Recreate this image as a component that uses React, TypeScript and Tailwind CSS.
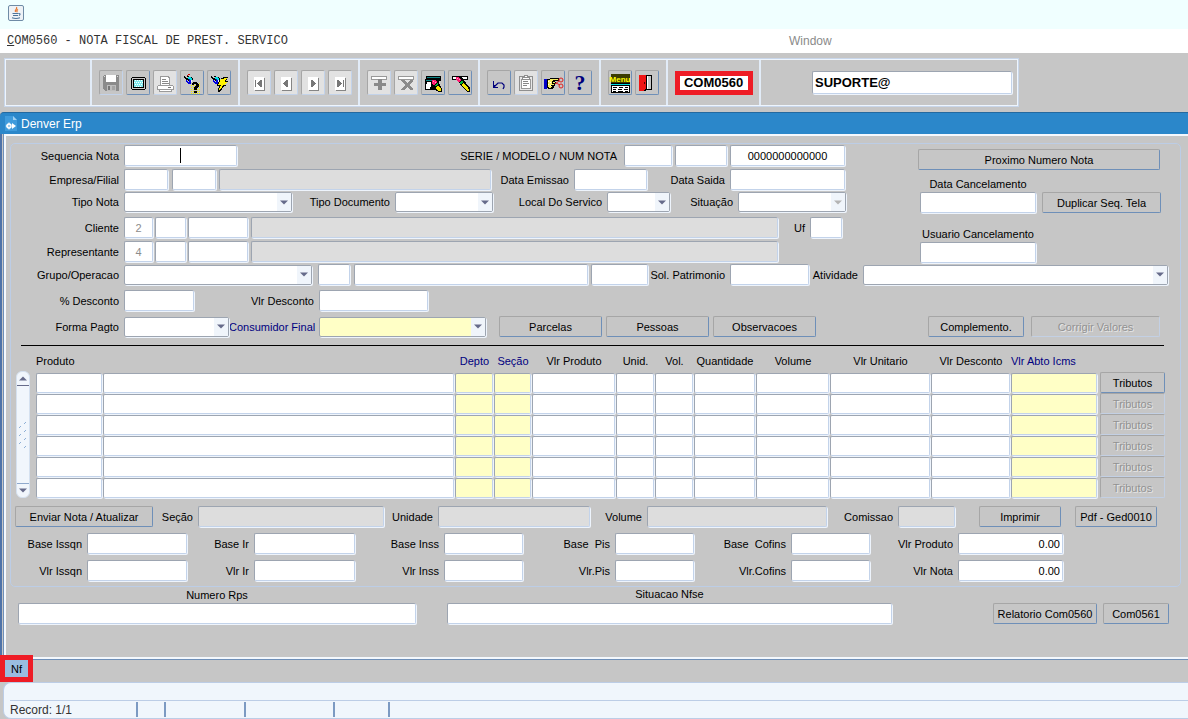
import React from 'react';
import clsx from 'clsx';

const fieldBase =
  'border border-t-[#9da5b1] border-l-[#9da5b1] border-r-[#c3d3ea] border-b-[#c3d3ea] rounded-[2px] shadow-[1px_1px_0_#eef4fc] outline-none';

type FieldProps = {
  id: string;
  className?: string;
  value?: string;
  gray?: boolean;
  label?: string;
};

function Field({ id, className, value, gray, label }: FieldProps) {
  return (
    <input
      id={id}
      aria-label={label}
      defaultValue={value}
      readOnly={gray}
      className={clsx(fieldBase, 'h-[21px] min-w-0 px-[2px] text-[11px]', gray ? 'bg-[#dddddd]' : 'bg-white', className)}
    />
  );
}

function Combo({ id, className, yellow, disabled }: { id: string; className?: string; yellow?: boolean; disabled?: boolean }) {
  return (
    <div className={clsx('relative h-5', className)}>
      <select
        id={id}
        disabled={disabled}
        className={clsx(
          'block h-full w-full appearance-none rounded-[2px] border border-[#9da5b1] px-1 text-[11px] shadow-[1px_1px_0_#eef4fc] outline-none',
          yellow ? 'bg-[#ffffc6]' : 'bg-white'
        )}
      >
        <option></option>
      </select>
      <span className="pointer-events-none absolute inset-y-px right-px flex w-[14px] items-center justify-center bg-[#f0f5fb]">
        <svg width="8" height="5" viewBox="0 0 8 5">
          <path d="M0 0.5h8L4 4.5z" fill={disabled ? '#b4b4b4' : '#666b8a'} />
        </svg>
      </span>
    </div>
  );
}

function Label({ htmlFor, className, children }: { htmlFor: string; className?: string; children: React.ReactNode }) {
  return (
    <label htmlFor={htmlFor} className={clsx('shrink-0 whitespace-pre pr-[5px] text-right', className)}>
      {children}
    </label>
  );
}

function Btn({ className, disabled, children }: { className?: string; disabled?: boolean; children: React.ReactNode }) {
  return (
    <button
      disabled={disabled}
      className={clsx(
        'h-[21px] shrink-0 whitespace-nowrap rounded-[2px] border border-t-[#a6a6a6] border-l-[#a6a6a6] text-center',
        disabled
          ? 'border-r-[#c3d0e4] border-b-[#c3d0e4] text-[#929292] [text-shadow:1px_1px_0_#e6e6e6]'
          : 'border-r-[#6e8fb8] border-b-[#6e8fb8]',
        className
      )}
    >
      {children}
    </button>
  );
}

/* ---------- toolbar icons, drawn on the 24px face of the button ---------- */

const SaveIcon = (
  <>
    <path d="M5 4h15v16H6l-2-2V5h1z" fill="#8b8b8b" />
    <path d="M7 4h10v7H7z" fill="#fff" />
    <path d="M5 5h1v1H5zM18 5h1v1h-1z" fill="#ddd" />
    <path d="M8 14h9v6H8z" fill="#bdbdbd" />
    <path d="M9 15h2v4H9z" fill="#777" />
    <path d="M13 15h3v4h-3z" fill="#a5a5a5" />
  </>
);

const ScreenIcon = (
  <>
    <path d="M6 6h13v1h1v11h-1v1H6v-1H5V7h1z" fill="#000" />
    <path d="M6 7h13v11H6z" fill="#c6c6c6" />
    <path d="M7 8h11v9H7z" fill="#000" />
    <path d="M8 9h9v7H8z" fill="#7fe9ee" />
    <path
      d="M9 9h1v1H9zM11 9h1v1h-1zM13 9h1v1h-1zM15 9h1v1h-1zM8 11h1v1H8zM10 11h1v1h-1zM12 11h1v1h-1zM14 11h1v1h-1zM16 11h1v1h-1zM9 13h1v1H9zM11 13h1v1h-1zM13 13h1v1h-1zM15 13h1v1h-1zM10 15h1v1h-1zM12 15h1v1h-1zM14 15h1v1h-1z"
      fill="#fff"
    />
  </>
);

const PrintIcon = (
  <>
    <path d="M7 5h8l2 2v7H7z" fill="#999" />
    <path d="M8 6h7l1 2v6H8z" fill="#fff" />
    <path d="M9 8h4v1H9zM9 10h6v1H9zM9 12h7v1H9z" fill="#888" />
    <path d="M5 14h15v1h1v4h-2v2H6v-2H4v-4h1z" fill="#9a9a9a" />
    <path d="M5 15h15v3H5zM7 19h11v1H7z" fill="#fff" />
    <path d="M15 16h3v1h-3z" fill="#777" />
  </>
);

const Torch = (
  <>
    <path d="M4 5h1v1h1v1h2v1h1v2H8V9H6V8H5V7H4zM11 6h1v1h1v2h-1V8h-1z" fill="#000" />
    <path d="M8 6h3v1h1v2h-2V8H8z" fill="#00dce0" />
    <path d="M6 9h1v1h1v1h1V8h1v1h1v4H8v-1H7v-1H6z" fill="#0000e0" />
    <path d="M7 5h2v1H7z" fill="#000" />
    <path d="M11 9h1v2h-1z" fill="#e8ffff" />
  </>
);

const QueryIcon = (
  <>
    <path d="M8 3h2v1H8zM7 4h1v1H7z" fill="#d00000" />
    {Torch}
    <path d="M17 12.500h4M11 14.500h10M11 16.500h10M11 18.500h10M11 20.500h10M11 22.500h10" stroke="#f4f000" strokeDasharray="1 1" />
    <path d="M13 11h4v1h1v1h1v3h-1v1h-1v2h-3v-3h1v-1h1v-2h-2v1h-2v-2h1z" fill="#000" />
    <path d="M14 20h3v2h-3z" fill="#000" />
  </>
);

const ExecuteIcon = (
  <>
    {Torch}
    <path d="M16 6h5v1h-1v2h-1v1h2v1h-1v1h-1v1h-1v1h1v1h-2v1h-1v1h-1v2h-1v1h-1v1h-2v-4h1v-2h-2v-2h1v-2h1v-2h1V9h1V7h1z" fill="#000" />
    <path d="M17 7h3v1h-1v1h-1v2h2v1h-1v1h-1v1h-2v1h-1v2h-1v1h-1v1h-1v-2h1v-2h1v-1h-3v-1h1v-2h1v-2h1V8h2z" fill="#fff200" />
  </>
);

const page = (
  <>
    <path d="M8 7h10v13H8z" fill="#858585" />
    <path d="M7 6h10v13H7z" fill="#fff" />
  </>
);

const FirstIcon = (
  <>
    {page}
    <path d="M8 9h1v7H8zM15 9v7h-2v-1h-1v-1h-1v-1h-1v-1h1v-1h1v-1h1V9z" fill="#777" />
  </>
);
const PrevIcon = (
  <>
    {page}
    <path d="M14 9v7h-2v-1h-1v-1h-1v-1H9v-1h1v-1h1v-1h1V9z" fill="#777" />
  </>
);
const NextIcon = (
  <>
    {page}
    <path d="M10 9v7h2v-1h1v-1h1v-1h1v-1h-1v-1h-1v-1h-1V9z" fill="#777" />
  </>
);
const LastIcon = (
  <>
    {page}
    <path d="M15 9h1v7h-1zM9 9v7h2v-1h1v-1h1v-1h1v-1h-1v-1h-1v-1h-1V9z" fill="#777" />
  </>
);

const InsertIcon = (
  <>
    <path d="M4 5h16v4H4z" fill="#999" />
    <path d="M5 6h14v2H5z" fill="#fff" />
    <path d="M11 8h4v4h4v3h-4v4h-4v-4H7v-3h4z" fill="#8a8a8a" />
  </>
);

const RemoveIcon = (
  <>
    <path d="M4 5h16v4H4z" fill="#999" />
    <path d="M5 6h14v2H5z" fill="#fff" />
    <path d="M7 9h3l3 3 3-3h3v1l-4 4 4 4v1h-3l-3-3-3 3H7v-1l4-4-4-4z" fill="#8a8a8a" />
  </>
);

const ClearRecordIcon = (
  <>
    <path d="M5 5h15v5h-2v9H4V8h1z" fill="#000" />
    <path d="M6 6h13v1H6zM5 9h12v1H5z" fill="#0b8585" />
    <path d="M6 11h4v5H9v2H5v-5h1z" fill="#fff" />
    <path d="M11 8h4v1h2v2h1v2h1v2h1v2h1v4h-4v-1h-2v-2h-1v-2h-2v-2h-1v-2h-1v-2h1z" fill="#000" />
    <path d="M11 9h4v1h1v2h-1v1h-1v1h-2v-1h-1z" fill="#ff1a70" />
    <path d="M12 10h1v1h-1zM14 11h1v1h-1z" fill="#ffa0d0" />
    <path d="M16 12h1v2h-1v1h-2v-1h1v-1h1z" fill="#00b43a" />
    <path d="M16 15h2v1h1v1h1v3h-3v-1h-1v-1h-1v-2h1z" fill="#f6e600" />
  </>
);

const ClearItemIcon = (
  <>
    <path d="M4 5h16v4H4z" fill="#000" />
    <path d="M5 6h14v2H5z" fill="#fff" />
    <path d="M8 5h4l3 3 7 9v4h-3l-7-8-4-4z" fill="#000" />
    <path d="M8 6h3v1h1v1h1v2h-1v1h-2v-1H9V9H8z" fill="#ff1a70" />
    <path d="M9 7h1v1H9zM11 8h1v1h-1z" fill="#ffa0d0" />
    <path d="M13 10h2v2h-1v1h-2v-2h1z" fill="#00b43a" />
    <path d="M15 12h1v1h1v1h1v1h1v1h1v2h1v2h-2v-1h-1v-1h-1v-1h-1v-1h-1v-1h-1v-2h1z" fill="#f6e600" />
  </>
);

const UndoIcon = (
  <>
    <path d="M6 10h1v4h1v2h3v1H6z" fill="#00007c" />
    <path d="M7 16l4-4h4l2 2v2l-1 2" fill="none" stroke="#00007c" strokeWidth="1.200" shapeRendering="auto" />
  </>
);

const PasteIcon = (
  <>
    <path d="M5 5h14v15H5z" fill="#8f8f8f" />
    <path d="M6 6h12v13H6z" fill="#e8e8e8" />
    <path d="M7 8h10v10H7z" fill="#999" />
    <path d="M8 9h8v8H8z" fill="#fff" />
    <path d="M8 6h8v3H8zM10 4h4v2h-4z" fill="#8f8f8f" />
    <path d="M9 7h6v1H9zM11 5h2v1h-2z" fill="#fff" />
    <path d="M9 10h5v1H9zM9 12h6v1H9zM9 14h4v1H9z" fill="#888" />
  </>
);

const HandIcon = (
  <>
    <path d="M3 8h3v10H3z" fill="#0000c8" />
    <path d="M6 8h3V7h9v3h-4v1h1v2h-1v2h-1v2h-1v1H7v-1H6z" fill="#000" />
    <path d="M7 9h2V8h8v1h-5v1h-1v6h-1v1H8v-1H7z" fill="#f8ee60" />
    <path d="M7 10h1v1H7zM9 11h1v1H9zM7 13h1v1H7zM9 14h1v1H9z" fill="#fff" />
    <path d="M11 10h3v1h-3zM11 12h3v1h-3zM10 14h3v1h-3z" fill="#000" />
    <path d="M12 11h2v1h-2zM11 13h2v1h-2z" fill="#f8ee60" />
    <g fill="none" stroke="#e02020" shapeRendering="auto">
      <circle cx="20" cy="9" r="2" />
      <circle cx="20" cy="15" r="2" />
      <path d="M14 13l4-3M15 12l4 2" />
    </g>
  </>
);

const HelpIcon = (
  <text x="12" y="19" textAnchor="middle" fill="#00007c" fontSize="22" fontWeight="bold" fontFamily="Liberation Serif, serif">
    ?
  </text>
);

const MenuIcon = (
  <>
    <path d="M3 3h19v9H3z" fill="#3c3c00" />
    <text x="12" y="11" textAnchor="middle" fill="#ffff00" fontSize="8" fontWeight="bold" fontFamily="Liberation Sans, sans-serif">
      Menu
    </text>
    <path d="M3 12h19v3H3z" fill="#000" />
    <path d="M3 13h19v1H3z" fill="#00dce0" />
    <path d="M3 15h19v7H3z" fill="#000" />
    <path d="M4 15h17v6H4z" fill="#fff" />
    <path d="M5 16h4v1H5zM5 18h3v1H5zM5 20h3v1H5zM11 16h4v1h-4zM17 16h3v1h-3zM10 18h4v1h-4zM16 18h4v1h-4zM10 20h5v1h-5zM17 20h3v1h-3z" fill="#000" />
  </>
);

const ExitIcon = (
  <>
    <path d="M4 4h13v15H4z" fill="#000" />
    <path d="M11 5h5v13h-5z" fill="#c6c6c6" />
    <path d="M12 5h1v13h-1z" fill="#fff" />
    <path d="M4 4h7v14l-2 2H4z" fill="#f01414" />
    <path d="M11 5h1v14h-1v1H9v-1h1v-1h1z" fill="#000" />
    <path d="M9 11h1v2H9z" fill="#500" />
  </>
);

type Tool = { name: string; icon: React.ReactNode; off?: boolean };

const toolGroups: { width: string; tools: Tool[] }[] = [
  {
    width: 'w-[148px]',
    tools: [
      { name: 'Salvar', icon: SaveIcon, off: true },
      { name: 'Tela', icon: ScreenIcon },
      { name: 'Imprimir', icon: PrintIcon, off: true },
      { name: 'Consultar', icon: QueryIcon },
      { name: 'Executar consulta', icon: ExecuteIcon },
    ],
  },
  {
    width: 'w-[120px]',
    tools: [
      { name: 'Primeiro', icon: FirstIcon, off: true },
      { name: 'Anterior', icon: PrevIcon, off: true },
      { name: 'Proximo', icon: NextIcon, off: true },
      { name: 'Ultimo', icon: LastIcon, off: true },
    ],
  },
  {
    width: 'w-[120px]',
    tools: [
      { name: 'Inserir', icon: InsertIcon, off: true },
      { name: 'Remover', icon: RemoveIcon, off: true },
      { name: 'Limpar registro', icon: ClearRecordIcon },
      { name: 'Limpar campo', icon: ClearItemIcon },
    ],
  },
  {
    width: 'w-[121px]',
    tools: [
      { name: 'Desfazer', icon: UndoIcon },
      { name: 'Lista', icon: PasteIcon, off: true },
      { name: 'Editar', icon: HandIcon },
      { name: 'Ajuda', icon: HelpIcon },
    ],
  },
  {
    width: 'w-[67px]',
    tools: [
      { name: 'Menu', icon: MenuIcon },
      { name: 'Sair', icon: ExitIcon },
    ],
  },
];

function ToolButton({ name, icon, off }: Tool) {
  return (
    <button
      aria-label={name}
      disabled={off}
      className={clsx(
        'h-[25px] w-6 rounded-[2px] border border-t-[#a6a6a6] border-l-[#a6a6a6]',
        off ? 'border-r-[#c3d3ea] border-b-[#c3d3ea]' : 'border-r-[#6e8fb8] border-b-[#6e8fb8]',
        off && name !== 'Salvar' && 'bg-[#e2e2e2]'
      )}
    >
      <svg className="-m-px block" width="24" height="24" viewBox="0 0 24 24" shapeRendering="crispEdges">
        {icon}
      </svg>
    </button>
  );
}

function Toolbar() {
  return (
    <div className="h-[59px] pl-[5px] pt-[6px]">
      <div className="flex h-[47px] w-[1013px] border border-[#eef5fd] shadow-[0_0_0_1px_#c8d6ea]">
        <div className="w-[86px] border-r-2 border-[#e2ecf8]" />
        {toolGroups.map((g, i) => (
          <div key={i} className={clsx('flex items-center justify-center gap-[3px] border-r-2 border-[#e2ecf8]', g.width)}>
            {g.tools.map((t) => (
              <ToolButton key={t.name} {...t} />
            ))}
          </div>
        ))}
        <div className="flex w-[93px] items-center justify-center border-r-2 border-[#e2ecf8]">
          <span className="flex h-6 w-[78px] items-center justify-center border-[5px] border-[#ee1c25] bg-white text-[13px] font-bold">
            COM0560
          </span>
        </div>
        <div className="flex flex-1 items-center justify-end pr-[5px]">
          <input
            aria-label="Usuario"
            defaultValue="SUPORTE@"
            className={clsx(fieldBase, 'h-[23px] w-[200px] bg-white px-[2px] text-[13px] font-bold')}
          />
        </div>
      </div>
    </div>
  );
}

/* ---------- item grid ---------- */

const columns = [
  { key: 'produto', title: 'Produto', col: 'w-[67px]' },
  { key: 'descricao', title: '', col: '' },
  { key: 'depto', title: 'Depto', col: 'w-[39px]', yellow: true },
  { key: 'secao', title: 'Seção', col: 'w-[38px]', yellow: true },
  { key: 'vlrProduto', title: 'Vlr Produto', col: 'w-[84px]' },
  { key: 'unid', title: 'Unid.', col: 'w-[39px]' },
  { key: 'vol', title: 'Vol.', col: 'w-[39px]' },
  { key: 'quantidade', title: 'Quantidade', col: 'w-[62px]' },
  { key: 'volume', title: 'Volume', col: 'w-[74px]' },
  { key: 'vlrUnitario', title: 'Vlr Unitario', col: 'w-[101px]' },
  { key: 'vlrDesconto', title: 'Vlr Desconto', col: 'w-[80px]' },
  { key: 'vlrAbto', title: 'Vlr Abto Icms', col: 'w-[87px]', yellow: true },
];

function ItemsTable() {
  return (
    <div className="ml-[5px] mr-[15px] flex items-end">
      <div className="mr-[6px] flex h-[127px] w-[14px] shrink-0 flex-col items-center justify-between rounded-[6px] border border-[#d5e1f0] bg-[#f1f6fc]">
        <button aria-label="Subir" className="flex h-[14px] w-full items-center justify-center border-b border-[#666b8a]">
          <svg width="8" height="5" viewBox="0 0 8 5">
            <path d="M0 4.5h8L4 0.5z" fill="#666b8a" />
          </svg>
        </button>
        <svg width="8" height="28" viewBox="0 0 8 28" stroke="#8fb0d6">
          <path d="M5 3l2-2M0 7l2-2M5 11l2-2M0 15l2-2M5 19l2-2M0 23l2-2M5 27l2-2" />
        </svg>
        <button aria-label="Descer" className="flex h-[14px] w-full items-center justify-center border-t border-[#8fa9cc]">
          <svg width="8" height="5" viewBox="0 0 8 5">
            <path d="M0 0.5h8L4 4.5z" fill="#666b8a" />
          </svg>
        </button>
      </div>
      <table className="w-full table-fixed border-separate border-spacing-0">
        <colgroup>
          {columns.map((c) => (
            <col key={c.key} className={c.col} />
          ))}
          <col className="w-[67px]" />
        </colgroup>
        <thead>
          <tr className="h-[26px]">
            {columns.map((c) => (
              <th
                key={c.key}
                className={clsx(
                  'whitespace-nowrap p-0 pt-1 font-normal',
                  c.key === 'produto' || c.key === 'vlrAbto' ? 'text-left' : 'text-center',
                  c.yellow && 'text-[#000080]'
                )}
              >
                {c.title}
              </th>
            ))}
            <th className="p-0" />
          </tr>
        </thead>
        <tbody>
          {[1, 2, 3, 4, 5, 6].map((row) => (
            <tr key={row} className="h-[21px]">
              {columns.map((c) => (
                <td key={c.key} className="p-0 pr-px">
                  <input
                    aria-label={`${c.title || 'Descricao'} ${row}`}
                    className={clsx(fieldBase, 'block h-5 w-full px-1 text-[11px]', c.yellow ? 'bg-[#ffffc6]' : 'bg-white')}
                  />
                </td>
              ))}
              <td className="p-0 pl-[2px]">
                <Btn className="block h-5 w-full" disabled={row > 1}>
                  Tributos
                </Btn>
              </td>
            </tr>
          ))}
        </tbody>
      </table>
    </div>
  );
}

const totals = [
  [
    ['Base Issqn', ''],
    ['Base Ir', ''],
    ['Base Inss', ''],
    ['Base  Pis', ''],
    ['Base  Cofins', ''],
    ['Vlr Produto', '0.00'],
  ],
  [
    ['Vlr Issqn', ''],
    ['Vlr Ir', ''],
    ['Vlr Inss', ''],
    ['Vlr.Pis', ''],
    ['Vlr.Cofins', ''],
    ['Vlr Nota', '0.00'],
  ],
];

function Totals() {
  return (
    <div className="mt-[6px] grid grid-cols-[76px_100px_67px_101px_89px_79px_92px_79px_97px_79px_88px_105px] items-center gap-y-[6px]">
      {totals.flat().map(([label, value]) => (
        <React.Fragment key={label}>
          <Label htmlFor={`tot-${label}`}>{label}</Label>
          <Field id={`tot-${label}`} value={value} className="text-right" />
        </React.Fragment>
      ))}
    </div>
  );
}

function NotaForm() {
  return (
    <div className="rounded-[5px] border border-[#bccde6] pb-[5px] pt-px">
      <div className="flex">
        <div className="mr-[72px] flex-1">
          <div className="flex items-center">
            <Label htmlFor="sequencia" className="w-[113px]">Sequencia Nota</Label>
            <div className={clsx(fieldBase, 'flex h-[21px] w-[113px] items-center bg-white')}>
              <input id="sequencia" className="min-w-0 flex-1 outline-none" />
              <span className="mr-[55px] h-[15px] w-px bg-black" />
            </div>
            <Label htmlFor="serie" className="ml-auto pr-[7px]">SERIE / MODELO / NUM NOTA</Label>
            <Field id="serie" label="Serie" className="w-12" />
            <Field id="modelo" label="Modelo" className="ml-[3px] w-[52px]" />
            <Field id="numNota" label="Num Nota" value="0000000000000" className="ml-[3px] mr-px w-[115px] text-center" />
          </div>
          <div className="mt-[3px] flex items-center">
            <Label htmlFor="empresa" className="w-[113px]">Empresa/Filial</Label>
            <Field id="empresa" className="w-11" />
            <Field id="filial" label="Filial" className="ml-1 w-11" />
            <Field id="empresaNome" label="Nome da empresa" gray className="ml-[3px] flex-1" />
            <Label htmlFor="emissao" className="w-[83px]">Data Emissao</Label>
            <Field id="emissao" className="w-[73px]" />
            <Label htmlFor="saida" className="w-[83px]">Data Saida</Label>
            <Field id="saida" className="mr-px w-[115px]" />
          </div>
          <div className="mt-[2px] flex items-center">
            <Label htmlFor="tipoNota" className="w-[113px]">Tipo Nota</Label>
            <Combo id="tipoNota" className="flex-1" />
            <Label htmlFor="tipoDoc" className="w-[103px]">Tipo Documento</Label>
            <Combo id="tipoDoc" className="w-[98px]" />
            <Label htmlFor="local" className="w-[114px]">Local Do Servico</Label>
            <Combo id="local" className="w-[63px]" />
            <Label htmlFor="situacao" className="w-[68px]">Situação</Label>
            <Combo id="situacao" disabled className="w-[108px]" />
          </div>
          <div className="mt-[5px] flex items-center">
            <Label htmlFor="cliente" className="w-[113px]">Cliente</Label>
            <Field id="cliente" value="2" className="w-[29px] text-center text-[#8c8c8c]" />
            <Field id="clienteFilial" label="Filial do cliente" className="ml-[2px] w-[31px]" />
            <Field id="clienteCod" label="Codigo do cliente" className="ml-[2px] w-[60px]" />
            <Field id="clienteNome" label="Nome do cliente" gray className="ml-[3px] flex-1" />
            <Label htmlFor="uf" className="w-8">Uf</Label>
            <Field id="uf" className="mr-1 w-8" />
          </div>
          <div className="mt-[3px] flex items-center">
            <Label htmlFor="repr" className="w-[113px]">Representante</Label>
            <Field id="repr" value="4" className="w-[29px] text-center text-[#8c8c8c]" />
            <Field id="reprFilial" label="Filial do representante" className="ml-[2px] w-[31px]" />
            <Field id="reprCod" label="Codigo do representante" className="ml-[2px] w-[60px]" />
            <Field id="reprNome" label="Nome do representante" gray className="ml-[3px] mr-[68px] flex-1" />
          </div>
        </div>
        <div className="flex w-[262px] shrink-0 flex-col items-start">
          <Btn className="mt-1 w-[242px]">Proximo Numero Nota</Btn>
          <label htmlFor="dataCanc" className="ml-[2px] mt-[7px] w-[116px] text-center">Data Cancelamento</label>
          <div className="mt-px flex items-center">
            <Field id="dataCanc" className="ml-[2px] w-[116px]" />
            <Btn className="ml-[6px] w-[119px]">Duplicar Seq. Tela</Btn>
          </div>
          <label htmlFor="usuCanc" className="ml-[2px] mt-[14px] w-[116px] whitespace-nowrap text-center">
            Usuario Cancelamento
          </label>
          <Field id="usuCanc" className="ml-[2px] mt-px w-[116px]" />
        </div>
      </div>

      <div className="mt-px flex items-center">
        <Label htmlFor="grupo" className="w-[113px]">Grupo/Operacao</Label>
        <Combo id="grupo" className="w-[188px]" />
        <Field id="operacao" label="Operacao" className="ml-[6px] w-8" />
        <Field id="operacaoNome" label="Nome da operacao" className="ml-1 w-[234px]" />
        <Field id="cfop" label="Cfop" className="ml-[3px] w-[57px]" />
        <Label htmlFor="patrimonio" className="w-[82px]">Sol. Patrimonio</Label>
        <Field id="patrimonio" className="w-[79px]" />
        <Label htmlFor="atividade" className="w-[54px]">Atividade</Label>
        <Combo id="atividade" className="mr-3 flex-1" />
      </div>
      <div className="mt-[5px] flex items-center">
        <Label htmlFor="percDesc" className="w-[113px]">% Desconto</Label>
        <Field id="percDesc" className="w-[70px]" />
        <Label htmlFor="vlrDesc" className="w-[125px]">Vlr Desconto</Label>
        <Field id="vlrDesc" className="w-[109px]" />
      </div>
      <div className="mt-[5px] flex items-center">
        <Label htmlFor="forma" className="w-[113px]">Forma Pagto</Label>
        <Combo id="forma" className="w-[105px]" />
        <Label htmlFor="consumidor" className="w-[90px] text-[#000080]">Consumidor Final</Label>
        <Combo id="consumidor" yellow className="w-[167px]" />
        <Btn className="ml-[13px] w-[103px]">Parcelas</Btn>
        <Btn className="ml-1 w-[103px]">Pessoas</Btn>
        <Btn className="ml-1 w-[103px]">Observacoes</Btn>
        <Btn className="ml-auto w-[96px]">Complemento.</Btn>
        <Btn className="ml-[7px] mr-5 w-[129px]" disabled>Corrigir Valores</Btn>
      </div>

      <hr className="ml-[10px] mr-4 mt-2 border-black" />
      <ItemsTable />

      <div className="mt-2 flex items-center">
        <Btn className="ml-1 w-[138px]">Enviar Nota / Atualizar</Btn>
        <Label htmlFor="secao" className="w-[45px]">Seção</Label>
        <Field id="secao" gray className="w-[186px]" />
        <Label htmlFor="unidade" className="w-[54px]">Unidade</Label>
        <Field id="unidade" gray className="w-[152px]" />
        <Label htmlFor="volume" className="w-[57px]">Volume</Label>
        <Field id="volume" gray className="flex-1" />
        <Label htmlFor="comissao" className="w-[71px]">Comissao</Label>
        <Field id="comissao" gray className="w-[57px]" />
        <Btn className="ml-6 w-[82px]">Imprimir</Btn>
        <Btn className="ml-[14px] mr-[23px] w-[82px]">Pdf - Ged0010</Btn>
      </div>
      <Totals />
    </div>
  );
}

export default function App() {
  return (
    <div className="flex min-h-screen flex-col bg-[#c6c6c6] font-['Liberation_Sans',Arial,sans-serif] text-[11px] leading-[14px] text-black">
      <header className="flex h-[29px] items-start bg-[#f0ffff] pl-2 pt-[5px]">
        <svg width="16" height="16" viewBox="0 0 16 16">
          <rect x="0.5" y="0.5" width="15" height="15" rx="1.5" fill="#eef2f6" stroke="#6f8ba6" />
          <path d="M8.5 2c1.5 2-2.5 2.600-1 5M10 4.500c-1.500.8-1.500 1.500-.7 2.800" fill="none" stroke="#e8762c" strokeWidth="1.200" />
          <path d="M4.500 8.500h6M5 10.500h5M4 12.800q4 1.400 8 0M10.800 8.500q2.500 0 .2 2.200" fill="none" stroke="#4c7399" strokeWidth="1.100" />
        </svg>
      </header>
      <nav className="flex h-6 items-center bg-white pl-[7px]">
        <a href="#form" className="w-[782px] font-['Liberation_Mono',monospace] text-[12px] text-[#333]">
          <span className="underline">C</span>OM0560 - NOTA FISCAL DE PREST. SERVICO
        </a>
        <a href="#window" className="text-[12px] text-[#8a8a8a]">Window</a>
      </nav>

      <Toolbar />

      <div className="flex h-[22px] items-center rounded-tl-[4px] border-t border-[#24699f] bg-[#2b87ca] pl-[5px]">
        <svg width="13" height="15" viewBox="0 0 13 15">
          <path d="M0 0h8l4 4v11H0z" fill="#3f9bdc" />
          <path d="M8 0v4h4" fill="#9fd0f2" />
          <circle cx="4" cy="10" r="2" fill="none" stroke="#fff" strokeWidth="1.500" />
          <path d="M4 6.500v7M0.800 10h2" stroke="#fff" />
          <path d="M7 7l4 3-4 3z" fill="#fff" />
        </svg>
        <span className="ml-[3px] text-[12px] text-white">Denver Erp</span>
      </div>

      <main id="form" className="flex flex-1 border-l-2 border-[#4f73a8]">
        <div className="ml-px flex flex-1 flex-col border-b border-l border-[#6e8fb8]">
          <div className="flex flex-1 flex-col border-y-2 border-l-2 border-[#f4f8fd] pl-1 pr-[7px] pt-[7px]">
            <NotaForm />
            <div className="flex items-end pl-2">
              <div className="flex flex-col">
                <label htmlFor="rps" className="h-4 pt-px text-center">Numero Rps</label>
                <Field id="rps" className="w-[398px]" />
              </div>
              <div className="ml-[31px] flex flex-col">
                <label htmlFor="nfse" className="h-4 text-center">Situacao Nfse</label>
                <Field id="nfse" className="w-[445px]" />
              </div>
              <Btn className="ml-auto w-[104px]">Relatorio Com0560</Btn>
              <Btn className="ml-[6px] mr-3 w-[66px]">Com0561</Btn>
            </div>
          </div>
        </div>
      </main>

      <div className="flex h-[22px]">
        <button className="relative -mt-[5px] h-[27px] w-[33px] border-[5px] border-[#ee1c25] bg-[#9abde0]">Nf</button>
      </div>

      <footer className="ml-[3px] flex h-[37px] flex-col justify-end rounded-l-[8px] border-b border-l border-t border-[#bccde6] bg-[#f0f6fc]">
        <div className="ml-[6px] flex h-[18px] items-center border-t border-[#bccde6] text-[12px] text-[#333]">
          <span className="w-[126px]">Record: 1/1</span>
          <span className="h-[15px] w-7 border-l-2 border-[#7c9ac2]" />
          <span className="h-[15px] w-20 border-l-2 border-[#7c9ac2]" />
          <span className="h-[15px] w-[89px] border-l-2 border-[#7c9ac2]" />
          <span className="h-[15px] w-[55px] border-l-2 border-[#7c9ac2]" />
          <span className="h-[15px] border-l-2 border-[#7c9ac2]" />
        </div>
      </footer>
    </div>
  );
}
